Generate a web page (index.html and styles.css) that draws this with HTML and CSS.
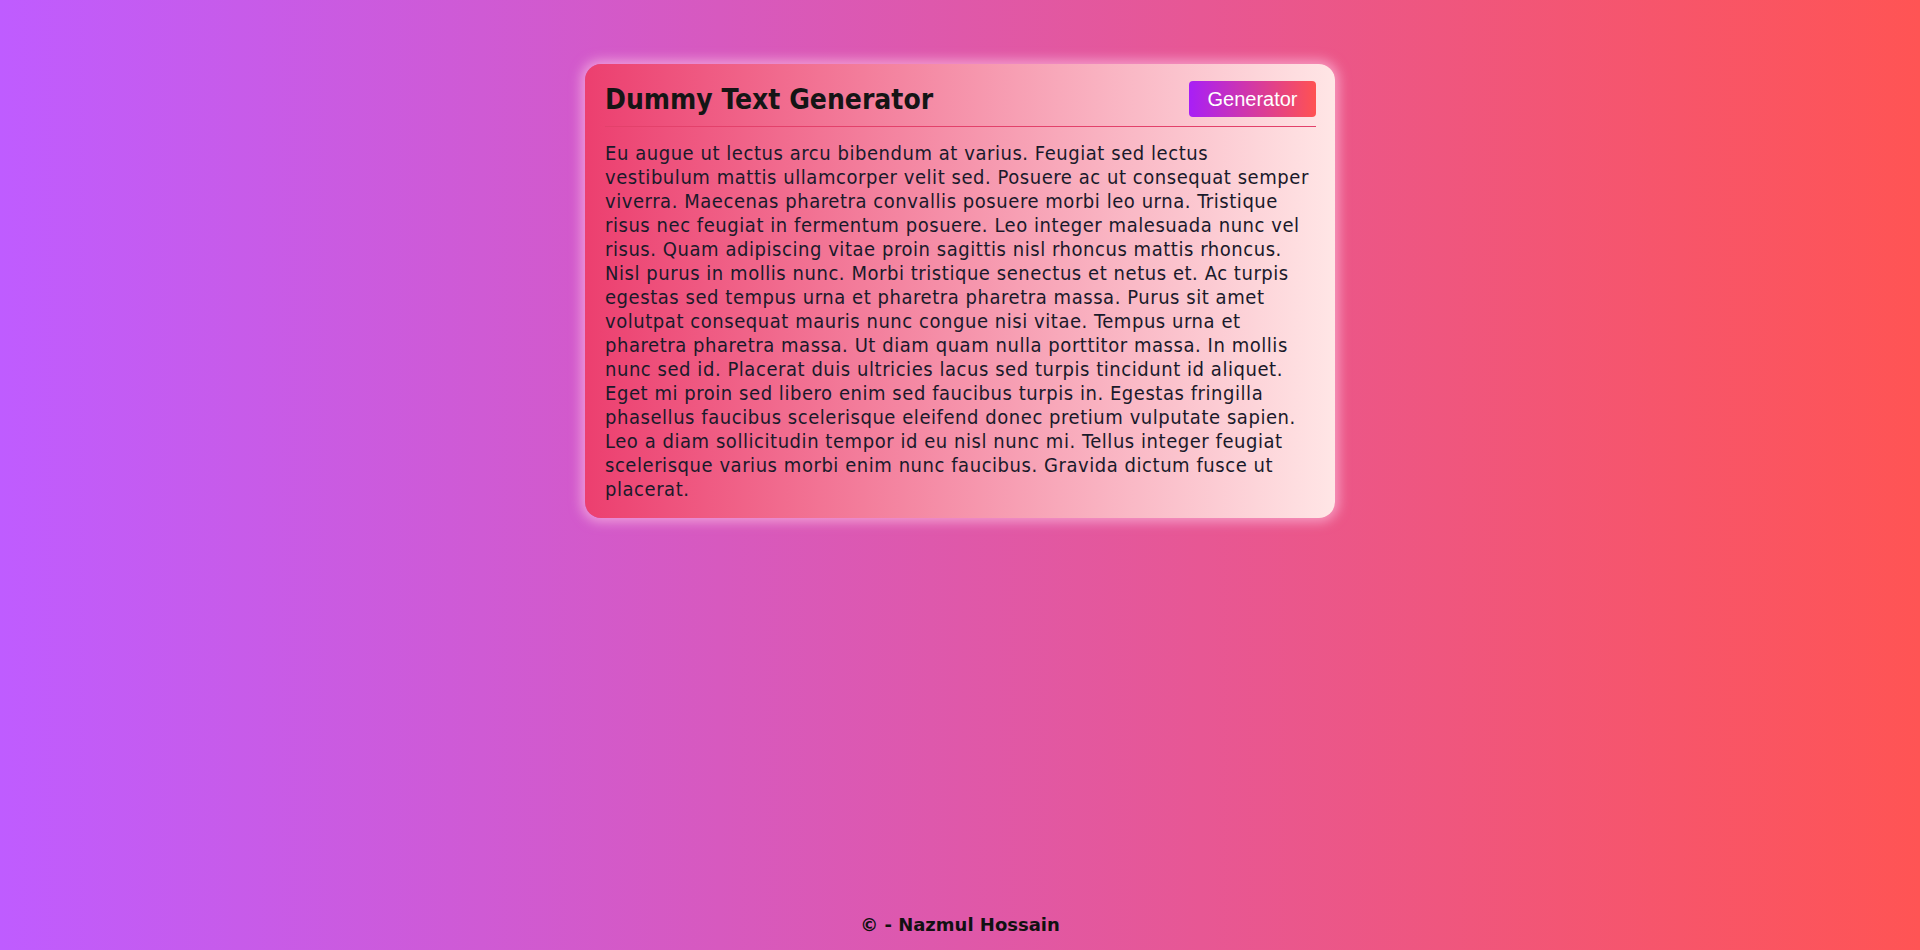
FILE: index.html
```html
<!DOCTYPE html>
<html lang="en">
<head>
<meta charset="UTF-8">
<title>Dummy Text Generator</title>
<link rel="stylesheet" href="styles.css">
</head>
<body>
<main class="page">
  <section class="card">
    <header class="card-head">
      <h1 class="title">Dummy Text Generator</h1>
      <button class="gen-btn" type="button">Generator</button>
    </header>
    <p class="text">Eu augue ut lectus arcu bibendum at varius. Feugiat sed lectus vestibulum mattis ullamcorper velit sed. Posuere ac ut consequat semper viverra. Maecenas pharetra convallis posuere morbi leo urna. Tristique risus nec feugiat in fermentum posuere. Leo integer malesuada nunc vel risus. Quam adipiscing vitae proin sagittis nisl rhoncus mattis rhoncus. Nisl purus in mollis nunc. Morbi tristique senectus et netus et. Ac turpis egestas sed tempus urna et pharetra pharetra massa. Purus sit amet volutpat consequat mauris nunc congue nisi vitae. Tempus urna et pharetra pharetra massa. Ut diam quam nulla porttitor massa. In mollis nunc sed id. Placerat duis ultricies lacus sed turpis tincidunt id aliquet. Eget mi proin sed libero enim sed faucibus turpis in. Egestas fringilla phasellus faucibus scelerisque eleifend donec pretium vulputate sapien. Leo a diam sollicitudin tempor id eu nisl nunc mi. Tellus integer feugiat scelerisque varius morbi enim nunc faucibus. Gravida dictum fusce ut placerat.</p>
  </section>
</main>
<footer class="footer">© - Nazmul Hossain</footer>
</body>
</html>
```

FILE: styles.css
```css
* { box-sizing: border-box; }
html, body { margin: 0; height: 100%; }
body {
  background: linear-gradient(to right, #bf5cff, #ff5454);
  font-family: "DejaVu Sans Condensed", "DejaVu Sans", sans-serif;
  display: flex;
  flex-direction: column;
  min-height: 950px;
  color: #111;
}
.page {
  flex: 1;
  display: flex;
  justify-content: center;
  align-items: flex-start;
  padding-top: 64px;
}
.card {
  width: 750px;
  border-radius: 16px;
  background: linear-gradient(to right, #ec3f6f, #ffe6e6);
  box-shadow: 0 0 12px 4px rgba(255, 200, 230, 0.6);
  padding: 17px 19px 17px 20px;
}
.card-head {
  display: flex;
  justify-content: space-between;
  align-items: center;
  padding-bottom: 9px;
  border-bottom: 1px solid #e3416b;
}
.title {
  margin: 0;
  font-family: "DejaVu Sans Condensed", "DejaVu Sans", sans-serif;
  font-size: 28px;
  font-weight: bold;
  color: #151515;
}
.gen-btn {
  width: 127px;
  height: 36px;
  border: none;
  border-radius: 4px;
  background: linear-gradient(to right, #a81ff6, #ff5252);
  color: #fff;
  font-family: "Liberation Sans", Arial, sans-serif;
  font-size: 20px;
  padding: 0;
}
.text {
  margin: 14px 0 0;
  font-size: 20px;
  line-height: 24px;
  letter-spacing: 0.55px;
  color: #1a1a2a;
}
.footer {
  text-align: center;
  font-family: "DejaVu Sans", sans-serif;
  font-weight: bold;
  font-size: 18px;
  padding-bottom: 15px;
  color: #111;
}
```
